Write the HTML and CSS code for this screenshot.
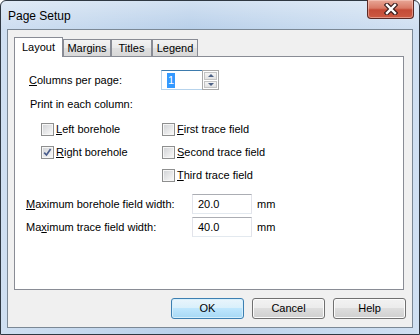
FILE: index.html
```html
<!DOCTYPE html>
<html lang="en">
<head>
  <meta charset="UTF-8">
  <title>Page Setup</title>
  <link rel="stylesheet" href="styles.css">
</head>
<body>

<div class="window">
  <!-- Title bar -->
  <div class="titlebar">
    <span class="title">Page Setup</span>
    <div class="close">
      <svg width="14" height="12" viewBox="0 0 14 12">
        <path d="M3 2 L11 10 M11 2 L3 10" stroke="#3a1c1c" stroke-width="4.6" stroke-linecap="square" fill="none"/>
        <path d="M3 2 L11 10 M11 2 L3 10" stroke="#ffffff" stroke-width="2.4" stroke-linecap="square" fill="none"/>
      </svg>
    </div>
  </div>

  <div class="client">
    <div class="tabs">
      <div class="tab active" style="width: 47px">Layout</div>
      <div class="tab" style="width: 46px">Margins</div>
      <div class="tab" style="width: 39px">Titles</div>
      <div class="tab" style="width: 44px">Legend</div>
    </div>

    <div class="panel">
      <div class="columns-row">
        <label class="columns-label"><u>C</u>olumns per page:</label>
        <div class="spin">
          <div class="spin-input"><span class="sel">1</span></div>
          <div class="spin-btns">
            <div class="spin-btn"><span class="arrow-up"></span></div>
            <div class="spin-btn"><span class="arrow-down"></span></div>
          </div>
        </div>
      </div>

      <div class="group-label">Print in each column:</div>

      <div class="checks">
        <div class="check"><span class="box"></span><u>L</u>eft borehole</div>
        <div class="check"><span class="box"></span><u>F</u>irst trace field</div>
        <div class="check"><span class="box checked"><svg width="11" height="11" viewBox="0 0 11 11"><path d="M2.2 5.6 L4.5 8 L8.6 2" stroke="#4a5d8c" stroke-width="1.7" fill="none"/></svg></span><u>R</u>ight borehole</div>
        <div class="check"><span class="box"></span><u>S</u>econd trace field</div>
        <div class="check empty"></div>
        <div class="check"><span class="box"></span><u>T</u>hird trace field</div>
      </div>

      <div class="fields">
        <div class="field-row">
          <label class="field-label"><u>M</u>aximum borehole field width:</label>
          <div class="textbox">20.0</div>
          <span class="unit">mm</span>
        </div>
        <div class="field-row">
          <label class="field-label">Ma<u>x</u>imum trace field width:</label>
          <div class="textbox">40.0</div>
          <span class="unit">mm</span>
        </div>
      </div>
    </div>

    <div class="buttons">
      <div class="btn default">OK</div>
      <div class="btn">Cancel</div>
      <div class="btn">Help</div>
    </div>
  </div>
</div>

</body>
</html>
```

FILE: styles.css
```css
body {
  margin: 0;
  font-family: 'Liberation Sans', Arial, sans-serif;
  font-size: 11px;
  color: #000;
  background: #fff;
}
.window {
  width: 420px;
  height: 335px;
  box-sizing: border-box;
  border: 1px solid #2f3842;
  border-radius: 6px 6px 0 0;
  background:
    linear-gradient(to bottom, rgba(255,255,255,0.35), rgba(255,255,255,0) 28px),
    linear-gradient(to right, #cfdff1, #b9d0ea 45%, #c4d8ee 70%, #d0e0f2);
  display: flex;
  flex-direction: column;
}
.titlebar {
  height: 28px;
  display: flex;
  align-items: flex-start;
  justify-content: space-between;
}
.title {
  font-size: 12px;
  line-height: 14px;
  margin: 8px 0 0 7px;
  color: #000;
}
.close {
  width: 45px;
  height: 18px;
  margin: -1px 5px 0 0;
  border: 1px solid #5a2a26;
  border-top: none;
  border-radius: 0 0 4px 4px;
  background: linear-gradient(to bottom, #e8a797 0%, #d97a66 45%, #c44b37 55%, #cc5a43 100%);
  box-shadow: inset 0 0 0 1px rgba(255,220,210,0.45);
  display: flex;
  align-items: center;
  justify-content: center;
}
.client {
  flex: 1;
  margin: 0 6px 6px;
  border: 1px solid #7b8895;
  background: #f0f0f0;
  padding: 7px 6px 0 6px;
  display: flex;
  flex-direction: column;
}

/* tabs */
.tabs {
  height: 19px;
  display: flex;
  align-items: flex-end;
}
.tab {
  height: 16px;
  border: 1px solid #898c95;
  border-bottom: none;
  background: linear-gradient(to bottom, #f3f3f3, #e9e9e9 50%, #e0e0e0 50%, #d8d8d8);
  text-align: center;
  line-height: 17px;
}
.tab.active {
  height: 19px;
  margin-bottom: -1px;
  position: relative;
  z-index: 1;
  background: #fff;
  line-height: 19px;
}
.panel {
  height: 232px;
  margin-right: 2px;
  border: 1px solid #898c95;
  background: #fff;
}

/* columns per page */
.columns-row {
  display: flex;
  align-items: center;
  height: 20px;
  margin-top: 13px;
  padding-left: 14px;
}
.columns-label {
  width: 132px;
}
.spin {
  display: flex;
  height: 20px;
}
.spin-input {
  width: 41px;
  box-sizing: border-box;
  border: 1px solid #b6d3ec;
  border-top-color: #3d7bad;
  border-right: none;
  background: #fff;
  padding-left: 5px;
  display: flex;
  align-items: center;
}
.sel {
  background: #3399ff;
  color: #fff;
  line-height: 15px;
  padding: 0 1px;
}
.spin-btns {
  width: 17px;
  box-sizing: border-box;
  border: 1px solid #a8a8a8;
  display: flex;
  flex-direction: column;
  gap: 1px;
  padding: 1px;
  background: #fff;
}
.spin-btn {
  flex: 1;
  background: linear-gradient(to bottom, #f4f4f4, #e2e2e2);
  border: 1px solid #c4c4c4;
  display: flex;
  align-items: center;
  justify-content: center;
}
.arrow-up {
  border-left: 3px solid transparent;
  border-right: 3px solid transparent;
  border-bottom: 3px solid #4d6185;
}
.arrow-down {
  border-left: 3px solid transparent;
  border-right: 3px solid transparent;
  border-top: 3px solid #4d6185;
}

/* check boxes */
.group-label {
  margin-top: 8px;
  padding-left: 15px;
  line-height: 13px;
}
.checks {
  margin-top: 12px;
  padding-left: 26px;
  display: grid;
  grid-template-columns: 121px auto;
  grid-template-rows: 13px 13px 13px;
  row-gap: 10px;
}
.check {
  display: flex;
  align-items: center;
  line-height: 13px;
}
.box {
  width: 13px;
  height: 13px;
  box-sizing: border-box;
  margin-right: 2px;
  border: 1px solid #8e8f8f;
  background: linear-gradient(135deg, #cfd1d4, #f5f5f5 85%);
  box-shadow: inset 0 0 0 1px #f6f6f6;
  display: flex;
  align-items: center;
  justify-content: center;
}

/* width fields */
.fields {
  margin-top: 12px;
  padding-left: 11px;
  display: flex;
  flex-direction: column;
  gap: 3px;
}
.field-row {
  display: flex;
  align-items: center;
  height: 20px;
}
.field-label {
  width: 166px;
}
.textbox {
  width: 60px;
  height: 20px;
  box-sizing: border-box;
  border: 1px solid #e2e3ea;
  border-top-color: #abadb3;
  border-bottom-color: #e3e9ef;
  padding-left: 5px;
  line-height: 18px;
  background: #fff;
}
.unit {
  margin-left: 5px;
}

/* dialog buttons */
.buttons {
  margin-top: 8px;
  display: flex;
  justify-content: flex-end;
  gap: 8px;
}
.btn {
  width: 73px;
  height: 21px;
  box-sizing: border-box;
  border: 1px solid #707070;
  border-radius: 3px;
  background: linear-gradient(to bottom, #f2f2f2 0%, #ebebeb 50%, #dddddd 50%, #cfcfcf 100%);
  box-shadow: inset 0 0 0 1px #fbfbfb;
  text-align: center;
  line-height: 19px;
}
.btn.default {
  border-color: #3c7fb1;
  background: linear-gradient(to bottom, #e9f5fc 0%, #d8effb 50%, #bee6fd 50%, #a7d9f5 100%);
  box-shadow: inset 0 0 0 1px #d6effc;
}
```
